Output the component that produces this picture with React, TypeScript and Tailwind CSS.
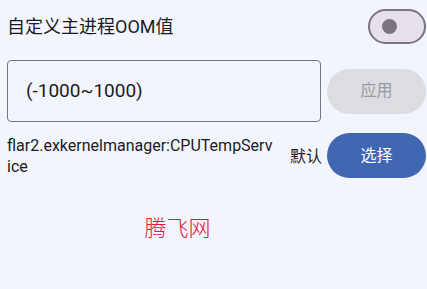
export default function App() {
  return (
    <div
      className="w-[427px] h-[289px] bg-[#f3f5fd] overflow-hidden"
      style={{ fontFamily: 'Roboto, "Noto Sans CJK SC", sans-serif' }}
    >
      <div className="flex items-center justify-between pl-[7px] pr-[1px] pt-[9px] h-[44px]">
        <span className="text-[18px] text-[#1b1b1f] leading-none">自定义主进程OOM值</span>
        <div className="w-[58px] h-[35px] rounded-full border-2 border-[#79747e] bg-[#e7e0ec] flex items-center pl-[12px]">
          <div className="w-[15px] h-[15px] rounded-full bg-[#79747e]" />
        </div>
      </div>

      <div className="flex items-center pl-[7px] mt-[16px] gap-[6px]">
        <div className="w-[314px] h-[62px] rounded-[4px] border border-[#79747e] flex items-center pl-[18px]">
          <span className="text-[19px] text-[#1b1b1f]">(-1000~1000)</span>
        </div>
        <button className="w-[99px] h-[45px] rounded-full bg-[#dcdde3] text-[16px] text-[#9a9ba2]">应用</button>
      </div>

      <div className="flex items-center pl-[7px] mt-[11px]">
        <div className="w-[268px] text-[16px] leading-[21px] text-[#1b1b1f] break-all">
          flar2.exkernelmanager:CPUTempService
        </div>
        <span className="text-[16px] text-[#1b1b1f] ml-[15px] mt-[2px]">默认</span>
        <button className="ml-[5px] w-[99px] h-[45px] rounded-full bg-[#4267b2] text-[16px] text-white">选择</button>
      </div>

      <div className="flex justify-center pr-[72px] mt-[32px]">
        <span className="text-[22px] font-light text-[#e8143c]" style={{ fontFamily: '"Noto Sans CJK SC", sans-serif' }}>腾飞网</span>
      </div>
    </div>
  );
}
